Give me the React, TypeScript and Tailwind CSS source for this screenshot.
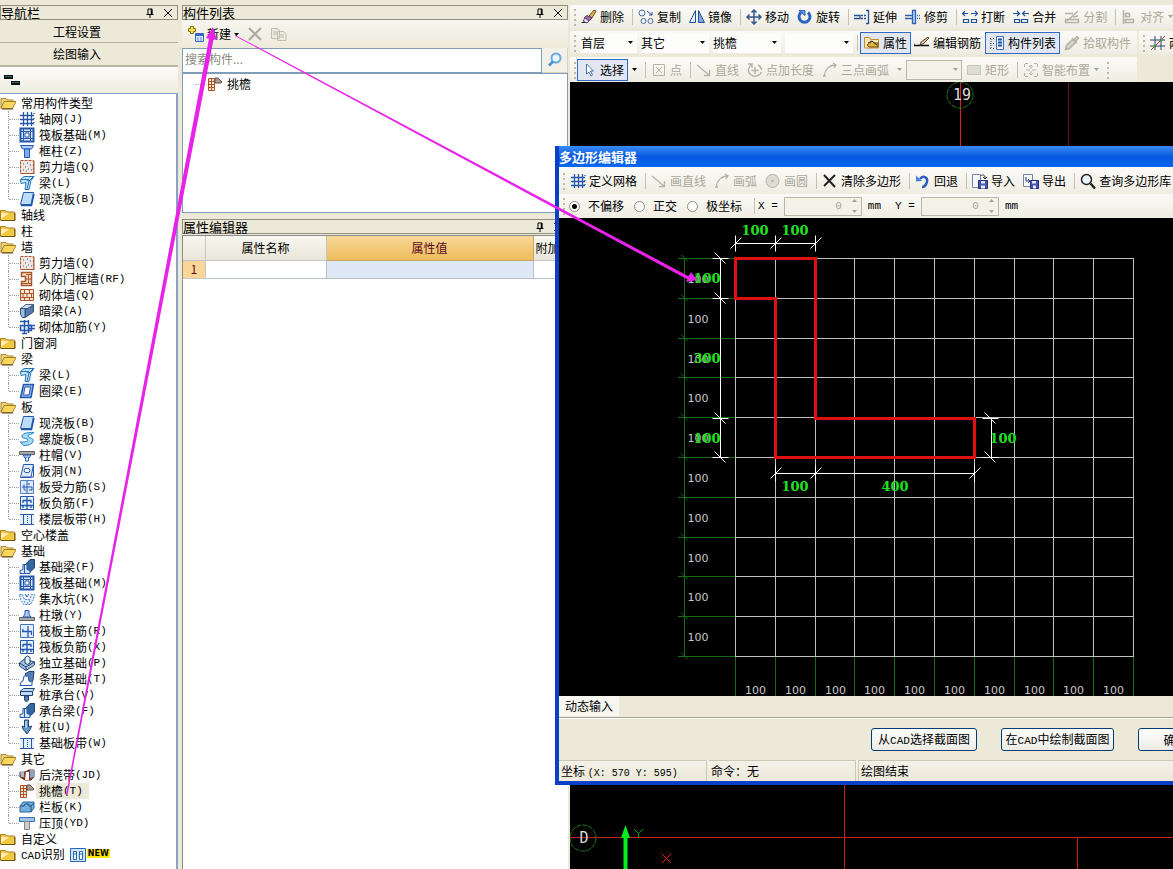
import React from "react";

type IconName = string;

const B = "#2757ad";
const L = "#a9cbf5";
const BR = "#a8552a";
const G = "#b5b3a6";

const icons: Record<IconName, React.ReactNode> = {
  folderOpen: (
    <>
      <path d="M1 13V3.500h5l1 1.500h6v2" fill="#f4d873" stroke="#a8812a" />
      <path d="M1 13.500 4 6.500h12l-3.500 7z" fill="#f9d65c" stroke="#a8812a" />
      <path d="M2 14h11" stroke="#5d471a" />
    </>
  ),
  folder: (
    <>
      <path d="M0.500 13.500V3.500h5l1 1.500h8v8.500z" fill="#f3c93f" stroke="#a8812a" />
      <path d="M1 6h8L1 12z" fill="#fff0a8" />
      <path d="M1 13.500h14V6" stroke="#6b5013" fill="none" />
    </>
  ),
  axis: <path d="M4.500 1v14M8.500 1v14M12.500 1v14M1 4.500h14M1 8.500h14M1 12.500h14M15 2v1M15 7v1M15 11v1" stroke={B} strokeWidth="1.300" fill="none" />,
  raft: (
    <>
      <path d="M1.500 1.500h13v13h-13z" fill="#d6e6fb" stroke={B} strokeWidth="2" />
      <path d="M4.500 1v14M11.500 1v14M1 4.500h14M1 11.500h14" stroke={B} />
      <path d="M6 6h4v4H6z" fill="#fff" stroke={B} />
    </>
  ),
  column: (
    <>
      <path d="M1.500 2.500h13l-2 3.500h-9z" fill={L} stroke={B} />
      <path d="M5.500 6h5v8.500h-5z" fill="#7eaeea" stroke={B} />
    </>
  ),
  shear: (
    <>
      <path d="M1.500 1.500h13v13h-13z" fill="#ebe6e4" stroke={BR} strokeDasharray="3 1" />
      <path d="M4 5h1M8 4h1M11 6h1M6 8h1M4 11h1M9 10h1M12 11h1M7 12h1" stroke="#555" />
      <path d="M2 14.500h13V2" stroke={BR} fill="none" />
    </>
  ),
  beam: (
    <>
      <path d="M1.500 4.500 5 1.500h10l-3 4-2 9H6l1-7-5 1z" fill="#c4e3fa" stroke="#2474c0" />
      <path d="m6 4 4 2 4-4M10 6 8 14M2 4.500h8" stroke="#2474c0" fill="none" />
    </>
  ),
  slab: (
    <>
      <path d="M4.500 1.500h10l-2.500 12H1.500z" fill="#bcdcfb" stroke={B} />
      <path d="M2 14.500h10.500L15 3" stroke={B} strokeWidth="1.500" fill="none" />
    </>
  ),
  rfwall: (
    <>
      <path d="M2.500 1.500h10v13h-10v-4h4v-5h-4z" fill="#f8e1cc" stroke={BR} strokeWidth="1.500" />
      <path d="M7 3.500h5M7 8h5M3 12.500h9M9.500 4v8" stroke={BR} />
    </>
  ),
  brick: (
    <>
      <path d="M1.500 2.500h13v11h-13z" fill="#fbe4d2" stroke={BR} />
      <path d="M1 6.500h14M1 10.500h14M5.500 3v3M10.500 3v3M8 7v3M4 7v3M12.500 7v3M5.500 11v3M10.500 11v3" stroke={BR} />
    </>
  ),
  darkbeam: (
    <>
      <path d="M1.500 5.500 7 1.500h7.500l-5 4z" fill="#d4e1ee" stroke="#4b6380" />
      <path d="m6 7 8.500-5v7L6 14.500z" fill="#547ba9" stroke="#334f75" />
      <path d="M1.500 5.500H6v9H3.500l-2-3z" fill="#9cbce2" stroke="#334f75" />
    </>
  ),
  brickbar: (
    <>
      <path d="M1.500 6.500h11v5h-11z" fill="#e1ecfa" stroke={B} strokeWidth="1.500" />
      <path d="M5.500 1v13M9.500 1v13M1 2.500h9M10 6.500h6M10 9.500h6M3 14.500h5" stroke={B} strokeWidth="1.500" />
    </>
  ),
  ring: (
    <>
      <path d="M4.500 1.500h10l-2.500 13H1.500z" fill="#8ab4ec" stroke={B} strokeWidth="1.500" />
      <path d="M6 4h5.500L10 12H4.500z" fill="#fff" stroke={B} />
    </>
  ),
  spiral: (
    <path d="M15 1.500C8 1 2 3 3 6c1 2 6 1 6 3s-5 2-8 2l4 3.500c5 0 10-2 9-6-1-2-6-2-5-4 1-1 4-1 6-3z" fill="#a7daf7" stroke="#2586c8" />
  ),
  cap: (
    <>
      <path d="M.5 4.500h15v3H.5z" fill="#a7a7a7" stroke="#636363" />
      <path d="m4 8 2 3h4l2-3z" fill={L} stroke={B} />
      <path d="M6.500 11v3h3v-3" fill="#fff" stroke={B} />
    </>
  ),
  hole: (
    <>
      <path d="M4.500 1.500h10l-2.500 13H1.500z" fill="#dceafb" stroke={B} />
      <path d="M14.500 2v12H3" stroke={B} fill="none" />
      <ellipse cx="8" cy="7.500" rx="3" ry="2.200" fill="#fff" stroke={B} />
    </>
  ),
  bars: (
    <>
      <path d="M1.500 1.500h13v13h-13z" fill="#dbe9fb" stroke="#5280c2" />
      <path d="M8 2v12M3 8h10M5 5.500v5l2 1M13 8v3h-3M11 5H9" stroke={B} fill="none" />
    </>
  ),
  neg: (
    <>
      <path d="M1.500 1.500h13v13h-13z" fill="#e4effc" stroke={B} />
      <path d="M4 5.500h8M4 5v3M12 5v3M8 2v12M2 10.500h12M4 10v3M12 10v3" stroke={B} strokeWidth="1.300" />
    </>
  ),
  mainbar: (
    <>
      <path d="M1.500 1.500h13v13h-13z" fill="#e4effc" stroke="#4272ba" />
      <path d="M9 3v11M3 8.500h10M4 6v3M12.500 8v4" stroke={B} strokeWidth="1.300" />
    </>
  ),
  strip: (
    <>
      <path d="M1 3h14v10H1z" fill="#e4effc" />
      <path d="M4.500 3v10M12.500 3v10" stroke={B} />
      <path d="M8.500 3v10" stroke={B} strokeDasharray="1 1" />
      <path d="M1 3.500h14M1 13.500h14" stroke={B} />
    </>
  ),
  fbeam: (
    <>
      <path d="M6 6 11 .5h4.500V9L10 14z" fill="#34659f" stroke="#1e406f" />
      <path d="M1 14.500v-3l3-1V5.500h4v5l3 1v3z" fill="#d3e5fa" stroke={B} />
      <path d="M5.500 6v8" stroke={B} />
    </>
  ),
  sump: (
    <>
      <path d="M.5 3.500h3l2 5h5l2-5h3l-1 5-3 5h-7l-3-5z" fill="#ddebfb" stroke="#4f82c2" strokeDasharray="2 1" />
      <path d="M6 3 8 6l2-3M5 11h1M8 12h1M10 10h1" stroke={B} fill="none" />
    </>
  ),
  pier: (
    <>
      <path d="M.5 10.500h15v3H.5z" fill="#a7a7a7" stroke="#636363" />
      <path d="m4 10 2-3V3.500h4V7l2 3z" fill={L} stroke={B} />
    </>
  ),
  isolated: (
    <>
      <path d="m.5 8 5-4 10 3v3L7 15.500.5 11z" fill="#a7c3e3" stroke="#1f456e" />
      <path d="M.5 8 7 12l8.500-5M7 12v3" stroke="#1f456e" fill="none" />
      <path d="M6 2.500 8.500 1 11 2.500V8l-2.500 1.500L6 8z" fill="#e3eefa" stroke="#1f456e" />
    </>
  ),
  stripf: (
    <>
      <path d="M6 3 10 .5h5L14 9l-2 4z" fill="#5180b4" stroke="#1e406f" />
      <path d="M1 14.500 2 11l2-1 1-5h4l1 5 3 1v3.500z" fill="#fff" stroke={B} />
    </>
  ),
  pilecap: (
    <>
      <path d="m1.500 4 3-2.500h11l-2 3v4h-12z" fill="#bed8f5" stroke="#1f456e" />
      <path d="M1.500 4.500h12" stroke="#1f456e" />
      <path d="M5.500 9h4v4l-2 2-2-2z" fill="#537bae" stroke="#1f456e" />
    </>
  ),
  pile: (
    <>
      <path d="M5.500 1h4v7l3-1-1 3-3.500 5L4 10 3 7l2.500 1z" fill="#6a95c8" stroke="#1f456e" />
      <path d="M7 2v7" stroke="#e5f1ff" />
    </>
  ),
  postcast: (
    <>
      <path d="M1 5h5l4-2h5v7l-3 3H6L1 10z" fill="#8a3e27" stroke="#602f23" />
      <path d="M1 4h4v6H2z" fill="#a8bed6" />
      <path d="M7 5h3v8H6z" fill="#fff" />
      <path d="M11 3h4v7l-4 1z" fill="#85a6cc" />
    </>
  ),
  eave: (
    <>
      <path d="M1.500 2.500h6v12h-6z" fill="#fbe1ce" stroke={BR} />
      <path d="M1 5.500h6M1 8.500h6M1 11.500h6M4.500 3v12" stroke={BR} />
      <path d="M8 2h3l4 4-1 1H8z" fill="#a6a09b" stroke="#66513f" />
    </>
  ),
  rail: (
    <>
      <path d="m1 7 3-4h11v6l-3 4H1z" fill="#78add9" stroke="#24679f" />
      <path d="M1 7h4l1-2h4v2h2l3-3M12 7v6" stroke="#185487" fill="none" />
    </>
  ),
  coping: (
    <>
      <path d="M.5 2.500h15v4H.5z" fill="#9dc5ef" stroke="#3672b0" />
      <path d="M5.500 6.500h5v8h-5z" fill="#ccc" stroke="#858585" />
    </>
  ),
  cad: (
    <>
      <path d="M.5 1.500h15v13H.5z" fill="#cfe5fb" stroke="#2769b5" />
      <path d="M3.500 4.500h3v8h-3zM9.500 4.500h3v8h-3z" fill="#fff" stroke="#2769b5" />
      <path d="M3 7h4M9 7h4" stroke="#2769b5" />
    </>
  ),
  erase: (
    <>
      <path d="M.5 13.500h5" stroke="#222" />
      <path d="m8 7 5-6 2 1-4 7z" fill="#e3b54d" stroke="#6b4b27" />
      <path d="m3 9 3-2.500L11 9l-3 3z" fill="#a06aa8" stroke="#583c6d" />
      <path d="m2 12 2-3 4 3-2 2z" fill="#ece7f3" stroke="#51496b" />
    </>
  ),
  copy: (
    <>
      <circle cx="4" cy="4" r="3" fill="#eef3fb" stroke="#526da0" />
      <circle cx="5.500" cy="12" r="2.500" fill="#eef3fb" stroke="#526da0" />
      <circle cx="12.500" cy="12" r="2.500" fill="#eef3fb" stroke="#526da0" />
      <path d="m9 2 5 4M14 3v3h-3" stroke="#23509a" fill="none" />
    </>
  ),
  mirror: (
    <>
      <path d="M6.500 1.500v12h-6z" fill="#e5effc" stroke="#23509a" />
      <path d="M9.500 1.500v12h6z" fill="#82a5dc" stroke="#23509a" />
    </>
  ),
  move: <path d="M8 1v14M1 8h14M5.500 3.500 8 1l2.500 2.500M5.500 12.500 8 15l2.500-2.500M3.500 5.500 1 8l2.500 2.500M12.500 5.500 15 8l-2.500 2.500" stroke="#34568c" strokeWidth="1.500" fill="none" />,
  rotate: (
    <>
      <path d="M4 3.500a5.500 5.500 0 1 0 7 0" fill="none" stroke="#2b62c4" strokeWidth="3" />
      <path d="M2 1.500h6v5z" fill="#6f9ae0" stroke="#2b62c4" />
    </>
  ),
  extend: <path d="M0 6.500h6v3H0M7 6.500h2M7 9.500h2M10 6.500h2M10 9.500h2M12 1.500h2.500v13H12" stroke="#23509a" strokeWidth="1.300" />,
  trim: <path d="M0 6.500h7M0 9.500h7M7.500 1.500h3v13h-3zM12 6.500h1M14 6.500h1M12 9.500h1M14 9.500h1" stroke="#2f62b5" fill="#b9d2f5" strokeWidth="1.300" />,
  brk: <path d="M0 4.500h6M3 2 .5 4.500 3 7M9 4.500h7M13 2l2.500 2.500L13 7M1.500 10.500h5v3h-5zM9.500 10.500h5v3h-5z" stroke="#23509a" fill="none" strokeWidth="1.200" />,
  join: <path d="M0 4.500h6M4 2l2.500 2.500L4 7M10 4.500h6M12 2 9.500 4.500 12 7M1.500 10.500h5v3h-5zM8.500 10.500h6v3h-6z" stroke="#23509a" fill="none" strokeWidth="1.200" />,
  split: <path d="M1 4.500h8M1.500 10.500h13v3h-13zM3 12 14 2M9 8l5-1" stroke={G} fill="none" strokeWidth="1.500" />,
  align: <path d="M2.500 1v14M4.500 4.500h4v3h-4zM4.500 10.500h8v3h-8z" stroke={G} fill="none" strokeWidth="1.500" />,
  props: (
    <>
      <path d="M.5 13V2.500h5l1 2h8V13z" fill="#fbe8b6" stroke="#c98d2e" />
      <path d="m3 10 5-4 2 2h4v4H5z" fill="#e4b23b" stroke="#69511f" />
      <path d="m4 8 4-2 5 4" stroke="#333" fill="none" />
    </>
  ),
  rebar: (
    <>
      <path d="M0 10.500h15" stroke="#111" strokeWidth="1.500" />
      <path d="m6 10 1-3 7-5 1 1-6 6z" fill="#d7c29a" stroke="#584832" />
      <path d="M0 8.500V11" stroke="#111" />
    </>
  ),
  list: (
    <>
      <path d="M7.500 1.500h7v13h-7z" fill="#eaf2fd" stroke="#456fae" />
      <path d="M9 4.500h4M9 7.500h4M9 10.500h4" stroke="#23509a" strokeWidth="2" />
      <path d="M1 3.500h2M4 3.500h2M1 8.500h2M4 8.500h2M1 13.500h2M4 13.500h2M2 4v9" stroke="#444" strokeDasharray="1 1" />
    </>
  ),
  pick: <path d="m1.500 14.500 1-4 6-6 3 3-6 6zM8 3l5 5M10 5l3-3.500 1.500 1.500L12 6" stroke={G} fill="#d8d6cc" strokeWidth="1.500" />,
  twopoint: (
    <>
      <path d="M5 1v14M11 1v14M0 5h15M0 11h15" stroke="#2a477c" />
      <path d="M1 15 15 1" stroke="#d03030" />
      <circle cx="5" cy="11" r="1.500" fill="#3a9a3a" />
      <circle cx="11" cy="5" r="1.500" fill="#3a9a3a" />
    </>
  ),
  cursor: <path d="M5.500 2v10l2.500-2 2 4 1.500-1-2-4h3z" fill="#fff" stroke="#4b6fae" />,
  point: <path d="M2.500 2.500h11v11h-11zM5 5l6 6M11 5l-6 6" stroke={G} fill="none" />,
  line: <path d="m1 3 12 10M13.500 8v5.500H8" stroke={G} fill="none" strokeWidth="1.300" />,
  ptlen: <path d="M1 2h4v4M4.500 2.500C1 5 0 10 4 13c4 2.500 9 1 10.500-3M11 3c2 1 3.500 3 3.500 5M8 5v7M4.500 8.500h7" stroke={G} fill="none" strokeWidth="1.400" />,
  arc: <path d="M2 14C3 8 7 3 14 3M11 1l3 2-2 3M1 14h3" stroke={G} fill="none" strokeWidth="1.300" />,
  rect: <path d="M1.500 3.500h13v9h-13z" fill="#deddd3" stroke="#c8c6ba" />,
  smart: <path d="M2 1.500h3M11 1.500h3M1.500 2v3M14.500 2v3M1.500 11v3M14.500 11v3M2 14.500h3M11 14.500h3M8 3v4M8 9v4M3 8h4M9 8h4M6 5l2-2 2 2M6 11l2 2 2-2" stroke={G} fill="none" />,
  circle: (
    <>
      <circle cx="7.500" cy="8" r="6.500" fill="#dedcd2" stroke={G} />
      <circle cx="7.500" cy="8" r="1.200" fill={G} />
    </>
  ),
  clear: <path d="m2 2 11 12M13 2 2 13" stroke="#222" strokeWidth="2" fill="none" />,
  undo: (
    <>
      <path d="M5 6c3-4 8-2 7 3-1 3-3 5-5 5" fill="none" stroke="#2e5fc0" strokeWidth="2.500" />
      <path d="M1 2.500v6l6-.5z" fill="#4f80d8" />
    </>
  ),
  imp: (
    <>
      <path d="M.5 1.500h8v13h-8z" fill="#f4f7fc" stroke="#7484a2" />
      <path d="M6.500 7.500h9v8h-9z" fill="#4a56b5" stroke="#272f7c" />
      <path d="M9 8h4v2.500H9zM9 12.500h4v3H9z" fill="#e8ecfa" />
      <path d="M9 3c2-2 4-1 4 2M11 4l2 2 2-2" stroke="#333" fill="none" />
    </>
  ),
  exp: (
    <>
      <path d="M.5 1.500h9v12h-9z" fill="#f4f7fc" stroke="#7484a2" />
      <path d="M3 4v4h4M5 6l2 2-2 2" stroke="#2b3d68" fill="none" />
      <path d="M7.500 7.500h8v8h-8z" fill="#4a56b5" stroke="#272f7c" />
      <path d="M9 8h4v2.500H9zM10 12.500h3v3h-3z" fill="#e8ecfa" />
    </>
  ),
  find: (
    <>
      <circle cx="6.500" cy="6.500" r="5" fill="#eaf4fc" stroke="#222" strokeWidth="1.500" />
      <path d="m10.500 10.500 4.500 5" stroke="#222" strokeWidth="2.500" />
    </>
  ),
  search: (
    <>
      <circle cx="9" cy="6" r="4.500" fill="#e6f5ff" stroke="#6aa9e0" strokeWidth="2" />
      <path d="m6 9.500-4 4" stroke="#4a8fd2" strokeWidth="2.500" />
    </>
  ),
  create: (
    <>
      <path d="M2.500.5h3v2h2v3h-2v2h-3v-2h-2v-3h2z" fill="#f6dd48" stroke="#8a741a" />
      <path d="M7.500 7.500h8v8h-8z" fill="#dbe9fc" stroke="#3767b5" />
      <path d="M8 9h7" stroke="#3767b5" strokeWidth="2" />
      <path d="M9 12h2M12 12h2M9 14h2M12 14h2" stroke="#5f8bd0" />
    </>
  ),
  del: <path d="m2 2 12 12M14 2 2 14" stroke="#aaa99c" strokeWidth="2" fill="none" />,
  dup: <path d="M.5 2.500h6l2 2v8h-8zM6.500 5.500h6l2.500 2v7H6.500zM2 6h4M2 8h4M8 9h5M8 11h5" stroke="#c0beb0" fill="#eceadf" />,
};

function Icon({ name }: { name: IconName }) {
  return (
    <svg viewBox="0 0 16 16" className="h-4 w-4 shrink-0" aria-hidden="true" fill="none">
      {icons[name]}
    </svg>
  );
}

function Label({ text }: { text: string }) {
  return (
    <>
      {text.split(/([\x21-\x7e]+)/).map((part, i) =>
        i % 2 === 1 ? (
          <span key={i} className="font-['Liberation_Mono'] text-[11px]">
            {part}
          </span>
        ) : (
          part
        ),
      )}
    </>
  );
}

function Caret({ dim = false }: { dim?: boolean }) {
  return (
    <svg viewBox="0 0 5 3" className="h-[3px] w-[5px] shrink-0" aria-hidden="true">
      <path d="M0 0h5L2.500 3z" fill={dim ? "#a5a396" : "#000"} />
    </svg>
  );
}

function Grip() {
  return (
    <svg viewBox="0 0 2 18" className="mr-[5px] ml-1 h-[18px] w-[2px] shrink-0" aria-hidden="true">
      <path d="M0 1h2v2H0zM0 6h2v2H0zM0 11h2v2H0zM0 16h2v2H0z" fill="#bdbaa8" />
    </svg>
  );
}

function Sep() {
  return <span className="mr-[5px] h-4 w-px shrink-0 bg-[#c5c2b2]" />;
}

function Tool({ icon, text, off = false }: { icon: IconName; text: string; off?: boolean }) {
  return (
    <button
      disabled={off}
      className={`mr-2 flex shrink-0 items-center gap-[3px] whitespace-nowrap ${off ? "text-[#aca899]" : "text-black"}`}
    >
      <Icon name={icon} />
      {text}
    </button>
  );
}

function ActiveTool({ icon, text }: { icon: IconName; text: string }) {
  return (
    <button
      aria-pressed="true"
      className="flex h-[22px] shrink-0 items-center gap-[3px] border border-[#316ac5] bg-[#e1e6f0] px-[3px] whitespace-nowrap"
    >
      <Icon name={icon} />
      {text}
    </button>
  );
}

function Combo({ label, value, width }: { label: string; value: string; width: string }) {
  return (
    <label className={`relative flex shrink-0 items-center ${width}`}>
      <select aria-label={label} defaultValue={value} className="h-5 w-full appearance-none bg-[#fdfdfb] outline-none">
        <option>{value}</option>
      </select>
      <span className="pointer-events-none absolute right-1">
        <Caret />
      </span>
    </label>
  );
}

function PanelTitle({ text }: { text: string }) {
  return (
    <div className="flex h-[15px] shrink-0 items-center justify-between border border-[#8f8e80] bg-[#ece9d8] pr-1">
      <h2 className="text-[13px] leading-[13px]">{text}</h2>
      <div className="flex items-center gap-2">
        <button aria-label="固定">
          <svg viewBox="0 0 10 10" className="h-[10px] w-[10px]">
            <path d="M3 1h4v5M3 1v5M1.500 6.500h7M5 7v3" stroke="#000" fill="none" />
            <path d="M6.500 1v5" stroke="#000" strokeWidth="1.500" />
          </svg>
        </button>
        <button aria-label="关闭">
          <svg viewBox="0 0 10 10" className="h-[10px] w-[10px]">
            <path d="m1 1 8 8M9 1 1 9" stroke="#000" fill="none" />
          </svg>
        </button>
      </div>
    </div>
  );
}

type Group = { name: string; items?: [IconName, string][] };

const tree: Group[] = [
  {
    name: "常用构件类型",
    items: [
      ["axis", "轴网(J)"],
      ["raft", "筏板基础(M)"],
      ["column", "框柱(Z)"],
      ["shear", "剪力墙(Q)"],
      ["beam", "梁(L)"],
      ["slab", "现浇板(B)"],
    ],
  },
  { name: "轴线" },
  { name: "柱" },
  {
    name: "墙",
    items: [
      ["shear", "剪力墙(Q)"],
      ["rfwall", "人防门框墙(RF)"],
      ["brick", "砌体墙(Q)"],
      ["darkbeam", "暗梁(A)"],
      ["brickbar", "砌体加筋(Y)"],
    ],
  },
  { name: "门窗洞" },
  {
    name: "梁",
    items: [
      ["beam", "梁(L)"],
      ["ring", "圈梁(E)"],
    ],
  },
  {
    name: "板",
    items: [
      ["slab", "现浇板(B)"],
      ["spiral", "螺旋板(B)"],
      ["cap", "柱帽(V)"],
      ["hole", "板洞(N)"],
      ["bars", "板受力筋(S)"],
      ["neg", "板负筋(F)"],
      ["strip", "楼层板带(H)"],
    ],
  },
  { name: "空心楼盖" },
  {
    name: "基础",
    items: [
      ["fbeam", "基础梁(F)"],
      ["raft", "筏板基础(M)"],
      ["sump", "集水坑(K)"],
      ["pier", "柱墩(Y)"],
      ["mainbar", "筏板主筋(R)"],
      ["neg", "筏板负筋(X)"],
      ["isolated", "独立基础(P)"],
      ["stripf", "条形基础(T)"],
      ["pilecap", "桩承台(V)"],
      ["fbeam", "承台梁(F)"],
      ["pile", "桩(U)"],
      ["strip", "基础板带(W)"],
    ],
  },
  {
    name: "其它",
    items: [
      ["postcast", "后浇带(JD)"],
      ["eave", "挑檐(T)"],
      ["rail", "栏板(K)"],
      ["coping", "压顶(YD)"],
    ],
  },
  { name: "自定义" },
  { name: "CAD识别" },
];

function Navigation() {
  return (
    <nav className="flex w-[178px] shrink-0 flex-col">
      <PanelTitle text="导航栏" />
      <button className="mt-px h-[22px] shrink-0 border-b border-[#b3b09d] bg-[#ece9d8] pr-6 hover:bg-white">工程设置</button>
      <button className="h-6 shrink-0 border-b-2 border-[#b9b6a6] bg-[#ece9d8] pr-6 hover:bg-white">绘图输入</button>
      <div className="flex h-[26px] shrink-0 items-center bg-linear-to-b from-[#fcfcfa] to-[#eeecdf] pl-1">
        <svg viewBox="0 0 16 10" className="h-[10px] w-4">
          <path d="M0 0h9v4H0zM7 6h9v4H7z" fill="#111" />
          <path d="M1 1.500h7M8 7.500h7" stroke="#1d6a68" />
        </svg>
      </div>
      <ul className="min-h-0 flex-1 overflow-hidden border-t border-r-2 border-[#8ba2c4] bg-white pt-px">
        {tree.map((g) => (
          <li key={g.name}>
            <button className="flex h-4 items-center gap-[5px] whitespace-nowrap">
              <Icon name={g.items ? "folderOpen" : "folder"} />
              <span>
                <Label text={g.name} />
              </span>
              {g.name === "CAD识别" && (
                <>
                  <Icon name="cad" />
                  <span className="-ml-1 mb-1 bg-[#ffe600] px-px font-['DejaVu_Sans'] text-[8px] leading-[9px] font-bold">NEW</span>
                </>
              )}
            </button>
            {g.items && (
              <ul>
                {g.items.map(([icon, text], i) => (
                  <li key={text} className="flex h-4 items-center pl-2">
                    <span
                      className={`w-px self-start border-l border-dotted border-[#a0a0a0] ${
                        i === g.items!.length - 1 ? "h-2" : "h-4"
                      }`}
                    />
                    <span className="w-[10px] border-t border-dotted border-[#a0a0a0]" />
                    <button className="flex h-4 items-center gap-px whitespace-nowrap">
                      <Icon name={icon} />
                      <span className={`flex h-4 items-center pl-[3px] ${text === "挑檐(T)" ? "bg-[#ece9d8] pr-1.5" : ""}`}>
                        <Label text={text} />
                      </span>
                    </button>
                  </li>
                ))}
              </ul>
            )}
          </li>
        ))}
      </ul>
    </nav>
  );
}

function Components() {
  return (
    <section className="mr-0.5 ml-1 flex w-[386px] shrink-0 flex-col">
      <PanelTitle text="构件列表" />
      <div className="flex h-7 shrink-0 items-center bg-linear-to-b from-[#f7f6f0] to-[#edeadb] pl-1.5">
        <button className="mr-2 flex items-center gap-[3px]">
          <Icon name="create" />
          新建
          <Caret />
        </button>
        <button aria-label="删除" className="mr-2">
          <Icon name="del" />
        </button>
        <button aria-label="复制">
          <Icon name="dup" />
        </button>
      </div>
      <div className="flex h-[25px] shrink-0">
        <input
          aria-label="搜索构件"
          placeholder="搜索构件..."
          className="min-w-0 flex-1 border border-[#7f9db9] bg-white px-0.5 pb-1 outline-none placeholder:text-[#8a8a80]"
        />
        <button aria-label="搜索" className="flex w-[26px] items-center justify-center border-r border-b border-[#d5d2c2] bg-[#f3f1e7]">
          <Icon name="search" />
        </button>
      </div>
      <ul className="h-[140px] shrink-0 border border-[#7f9db9] bg-white pt-0.5 pl-3">
        <li className="flex h-4 items-center">
          <span className="w-3 border-t border-dotted border-[#b0b0b0]" />
          <button className="flex items-center gap-1">
            <Icon name="eave" />
            挑檐
          </button>
        </li>
      </ul>
      <div className="h-1.5 shrink-0" />
      <PanelTitle text="属性编辑器" />
      <div className="mt-px min-h-0 flex-1 overflow-hidden border-t border-l border-[#8b8b86] bg-white">
        <table className="w-full table-fixed border-collapse">
          <colgroup>
            <col className="w-[22px]" />
            <col className="w-[121px]" />
            <col className="w-[207px]" />
            <col />
          </colgroup>
          <thead>
            <tr className="h-6 bg-linear-to-b from-[#f8f7f1] to-[#e9e6d8]">
              <th className="border-r border-b border-[#c3c8cc]" aria-label="序号" />
              <th className="border-r border-b border-[#c3c8cc] font-normal">属性名称</th>
              <th className="border-r border-b border-[#c3a76a] bg-linear-to-b from-[#f7d796] to-[#efbc5a] font-normal text-[#5b0a1e]">
                属性值
              </th>
              <th className="overflow-hidden border-b border-[#c3c8cc] pl-0.5 text-left font-normal whitespace-nowrap">附加</th>
            </tr>
          </thead>
          <tbody>
            <tr className="h-[18px]">
              <td className="border-r border-b border-[#c3c8cc] bg-[#fbd699] text-center leading-4 text-[#5b0a1e]">1</td>
              <td className="border-r border-b border-[#b5c0cb]" />
              <td className="border-r border-b border-[#b5c0cb] bg-[#dfe8f5]" />
              <td className="border-b border-[#b5c0cb]" />
            </tr>
          </tbody>
        </table>
      </div>
    </section>
  );
}

const bar = "flex items-center overflow-hidden bg-linear-to-b from-[#fbfaf7] to-[#efede2]";

function Toolbars() {
  return (
    <div className="flex shrink-0 flex-col gap-[3px] overflow-hidden">
      <div className={`${bar} h-[23px]`}>
        <Grip />
        <Tool icon="erase" text="删除" />
        <Sep />
        <Tool icon="copy" text="复制" />
        <Tool icon="mirror" text="镜像" />
        <Sep />
        <Tool icon="move" text="移动" />
        <Tool icon="rotate" text="旋转" />
        <Sep />
        <Tool icon="extend" text="延伸" />
        <Tool icon="trim" text="修剪" />
        <Sep />
        <Tool icon="brk" text="打断" />
        <Tool icon="join" text="合并" />
        <Tool icon="split" text="分割" off />
        <Sep />
        <Tool icon="align" text="对齐" off />
        <span className="-ml-1">
          <Caret dim />
        </span>
      </div>
      <div className="flex h-[23px] overflow-hidden">
        <div className={`${bar} w-[567px] shrink-0`}>
          <Grip />
          <Combo label="楼层" value="首层" width="w-[56px]" />
          <Combo label="类型" value="其它" width="w-[72px] pl-1" />
          <Combo label="构件类型" value="挑檐" width="w-[72px] pl-1" />
          <Combo label="构件" value="" width="w-[72px] pl-1" />
          <span className="mr-0.5 ml-1 h-4 w-px shrink-0 bg-[#c5c2b2]" />
          <ActiveTool icon="props" text="属性" />
          <span className="w-[3px] shrink-0" />
          <Tool icon="rebar" text="编辑钢筋" />
          <span className="-ml-1 shrink-0">
            <ActiveTool icon="list" text="构件列表" />
          </span>
          <span className="w-1 shrink-0" />
          <Tool icon="pick" text="拾取构件" off />
        </div>
        <div className={`${bar} ml-0.5 min-w-0 flex-1`}>
          <Grip />
          <Tool icon="twopoint" text="两点" />
        </div>
      </div>
      <div className="flex h-[25px]">
        <div className={`${bar} w-[567px] shrink-0`}>
          <Grip />
          <span className="-ml-1 flex shrink-0 items-center gap-1">
            <ActiveTool icon="cursor" text="选择" />
            <Caret />
          </span>
          <span className="w-2 shrink-0" />
          <Sep />
          <Tool icon="point" text="点" off />
          <Sep />
          <Tool icon="line" text="直线" off />
          <Tool icon="ptlen" text="点加长度" off />
          <Tool icon="arc" text="三点画弧" off />
          <Caret dim />
          <label className="relative mx-1 flex shrink-0 items-center">
            <select aria-label="绘制方式" disabled className="h-5 w-14 appearance-none border border-[#b9b6a5] bg-[#f3f1e8]" />
            <span className="absolute right-1">
              <Caret dim />
            </span>
          </label>
          <Tool icon="rect" text="矩形" off />
          <Sep />
          <Tool icon="smart" text="智能布置" off />
          <span className="-ml-1 flex shrink-0 items-center">
            <Caret dim />
          </span>
          <span className="w-1 shrink-0" />
          <Grip />
        </div>
      </div>
    </div>
  );
}

function Drawing() {
  return (
    <svg className="block min-h-0 w-full flex-1 bg-black" aria-label="绘图区">
      <g transform="translate(-570 -82)" fill="none">
        <path d="M960.500 82v200" stroke="#e01c2c" />
        <path d="M1068.500 82v200" stroke="#7c0b10" />
        <path d="M844.500 500v400" stroke="#d01820" />
        <path d="M570 837.500h1400" stroke="#d01820" />
        <path d="M1077.500 838v62" stroke="#d01820" />
        <circle cx="960" cy="95" r="13" stroke="#1c7c1c" strokeDasharray="5 1" />
        <circle cx="583" cy="838" r="13" stroke="#1c7c1c" strokeDasharray="5 1" />
        <path d="M625.500 900v-64" stroke="#00f020" strokeWidth="4" />
        <path d="m621 838 4.500-13 4.500 13z" fill="#00f020" />
        <path d="m634 829 4.500 4.500 5-4.500M638.500 833v5" stroke="#1c9c1c" />
        <path d="m662 854 9 9M671 854l-9 9" stroke="#e01c1c" />
        <g fill="#dcdcdc" fontFamily="'DejaVu Sans Mono', monospace" fontSize="15" textAnchor="middle">
          <text x="962" y="100">19</text>
          <text x="584" y="843">D</text>
        </g>
      </g>
    </svg>
  );
}

const steps = Array.from({ length: 11 }, (_, i) => i);
const gx = (i: number) => Math.round(735 + i * 39.8) + 0.5;
const gy = (i: number) => Math.round(258 + i * 39.8) + 0.5;

function PolygonCanvas() {
  const slash = (x: number, y: number) => `M${x} ${y - 8}v16M${x - 5} ${y + 5}l11 -11`;
  const back = (x: number, y: number) => `M${x - 8} ${y}h16M${x - 6} ${y - 6}l11 11`;
  return (
    <svg className="block min-h-0 w-full flex-1 bg-black" aria-label="多边形">
      <g transform="translate(-559 -218)" fill="none">
        {steps.map((i) => (
          <g key={i}>
            <path d={`M678 ${gy(i)}H735M681 ${gy(i) - 4}l7 7M${gx(i)} 657V800`} stroke="#156c15" />
            <path d={`M735 ${gy(i)}H1133M${gx(i)} 258V657`} stroke="#c0c0c0" />
          </g>
        ))}
        <path d="M684.500 258V657" stroke="#156c15" />
        <g fill="#c8c8c8" fontFamily="'DejaVu Sans', sans-serif" fontSize="11" textAnchor="middle">
          {steps.slice(0, 10).map((i) => (
            <g key={i}>
              <text x="698" y={gy(i) + 24}>100</text>
              <text x={gx(i) + 20} y="694">100</text>
            </g>
          ))}
        </g>
        <g stroke="#fff">
          <path d="M735 243.500H815M775.500 473.500H975M720.500 258V458M991.500 418V458" />
          <path d={[slash(735.5, 243.5), slash(775.5, 243.5), slash(815.5, 243.5)].join("")} />
          <path d={[slash(775.5, 473.5), slash(815.5, 473.5), slash(974.5, 473.5)].join("")} />
          <path d={[back(720.5, 258.5), back(720.5, 298.5), back(720.5, 418.5), back(720.5, 457.5)].join("")} />
          <path d={[back(990.5, 418.5), back(990.5, 457.5)].join("")} />
        </g>
        <path d="M735.500 258.500h80v160h159v39h-199v-159h-40z" stroke="#e01010" strokeWidth="3" />
        <g fill="#20e020" fontFamily="'DejaVu Serif', serif" fontWeight="bold" fontSize="13" textAnchor="middle">
          <text x="755" y="235">100</text>
          <text x="795" y="235">100</text>
          <text x="707" y="283">100</text>
          <text x="707" y="363">300</text>
          <text x="707" y="443">100</text>
          <text x="1003" y="443">100</text>
          <text x="795" y="491">100</text>
          <text x="895" y="491">400</text>
        </g>
      </g>
    </svg>
  );
}

function Radio({ id, text, on = false }: { id: string; text: string; on?: boolean }) {
  return (
    <span className="mr-2.5 flex shrink-0 items-center gap-2">
      <input
        type="radio"
        name="offset"
        id={id}
        defaultChecked={on}
        className="h-[11px] w-[11px] appearance-none rounded-full border border-[#8e8c80] bg-white checked:bg-[radial-gradient(circle,#000_2px,#fff_3px)]"
      />
      <label htmlFor={id}>{text}</label>
    </span>
  );
}

function Spin({ id, text }: { id: string; text: string }) {
  return (
    <span className="flex shrink-0 items-center font-['Liberation_Mono'] text-[11px]">
      <label htmlFor={id}>{text}</label>
      <span className="mx-1.5 flex h-[19px] w-[78px] items-center border border-[#b9b6a5] bg-[#f3f1e8] pr-1">
        <input id={id} disabled defaultValue="0" className="mr-2.5 w-full min-w-0 flex-1 text-right text-[#aca899]" />
        <svg viewBox="0 0 5 14" className="h-[14px] w-[5px] shrink-0" aria-hidden="true">
          <path d="M0 3h5L2.500 0zM0 11h5l-2.500 3z" fill="#a5a396" />
        </svg>
      </span>
      <span className="mr-[14px]">mm</span>
    </span>
  );
}

function DialogButton({ text, width }: { text: string; width: string }) {
  return (
    <button
      className={`flex h-[23px] shrink-0 items-center justify-center rounded-[3px] border border-[#003c74] bg-linear-to-b from-white to-[#ecebe5] whitespace-nowrap ${width}`}
    >
      <span>
        <Label text={text} />
      </span>
    </button>
  );
}

function PolygonDialog() {
  return (
    <div
      role="dialog"
      aria-label="多边形编辑器"
      className="absolute top-[146px] right-0 bottom-[84px] left-[555px] z-10 flex flex-col overflow-hidden border-b-4 border-l-4 border-[#0a3fc8] bg-[#ece9d8]"
    >
      <div className="flex h-[21px] shrink-0 items-center bg-linear-to-b from-[#3a8bf5] via-[#0558e0] to-[#0668f5]">
        <h1 className="text-[13px] font-bold text-white">多边形编辑器</h1>
      </div>
      <div className={`${bar} h-[27px] shrink-0`}>
        <Grip />
        <Tool icon="axis" text="定义网格" />
        <Sep />
        <Tool icon="line" text="画直线" off />
        <Tool icon="arc" text="画弧" off />
        <Tool icon="circle" text="画圆" off />
        <Sep />
        <Tool icon="clear" text="清除多边形" />
        <Sep />
        <Tool icon="undo" text="回退" />
        <Sep />
        <Tool icon="imp" text="导入" />
        <Tool icon="exp" text="导出" />
        <Sep />
        <Tool icon="find" text="查询多边形库" />
      </div>
      <div className={`${bar} h-6 shrink-0`}>
        <Grip />
        <span className="-ml-px flex shrink-0">
          <Radio id="none" text="不偏移" on />
          <Radio id="ortho" text="正交" />
          <Radio id="polar" text="极坐标" />
        </span>
        <span className="mr-[3px] ml-0.5 h-4 w-px shrink-0 bg-[#c5c2b2]" />
        <Spin id="dx" text="X =" />
        <Spin id="dy" text="Y =" />
      </div>
      <PolygonCanvas />
      <div className="flex h-[22px] shrink-0 items-start border-b border-[#a5a394]">
        <button className="h-5 bg-[#f7f6f0] px-1.5">动态输入</button>
      </div>
      <div className="flex h-[42px] shrink-0 items-center gap-6 overflow-hidden border-t border-white pl-[312px]">
        <DialogButton text="从CAD选择截面图" width="w-[106px]" />
        <DialogButton text="在CAD中绘制截面图" width="w-[113px]" />
        <DialogButton text="确定" width="w-[75px]" />
      </div>
      <div className="flex h-[21px] shrink-0 gap-0.5 bg-linear-to-b from-[#f4f2ea] to-[#ece9d8] leading-5">
        <span className="w-[148px] border-t border-r border-[#cac7b5] pl-0.5">
          坐标 <span className="font-['Liberation_Mono'] text-[10px]">(X: 570 Y: 595)</span>
        </span>
        <span className="w-[147px] border-t border-r border-[#cac7b5] pl-0.5">命令：无</span>
        <span className="flex-1 border-t border-l border-[#cac7b5] pl-0.5">绘图结束</span>
      </div>
    </div>
  );
}

function Pointers() {
  return (
    <svg className="pointer-events-none absolute inset-0 z-20 h-full w-full" aria-hidden="true">
      <g fill="#e823e8">
        <path d="M66 795 209.500 36l4.500 1L67.500 795z" />
        <path d="m206 38 7-11 4 13z" />
        <path d="m235 35 455 242-1.500 3L235 36z" />
        <path d="m691 272 6 8-11 2z" />
      </g>
    </svg>
  );
}

export default function App() {
  return (
    <div className="relative flex h-screen w-full overflow-hidden bg-[#ece9d8] pt-[5px] font-['Noto_Sans_CJK_SC',sans-serif] text-[12px] leading-4 text-black">
      <Navigation />
      <Components />
      <main className="flex min-w-0 flex-1 flex-col">
        <Toolbars />
        <Drawing />
      </main>
      <PolygonDialog />
      <Pointers />
    </div>
  );
}
